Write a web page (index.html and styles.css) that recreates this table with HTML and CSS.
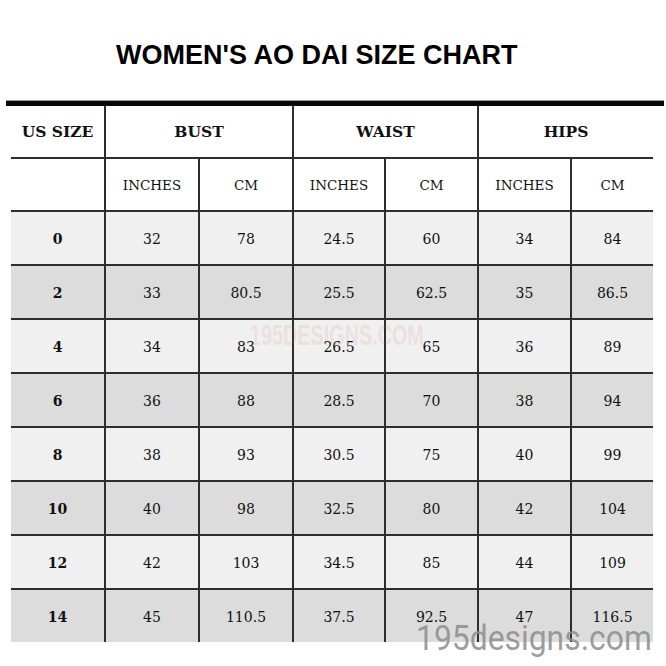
FILE: index.html
```html
<!DOCTYPE html>
<html>
<head>
<meta charset="utf-8">
<link rel="stylesheet" href="styles.css">
</head>
<body>
<div class="page">
  <h1 class="title">WOMEN'S AO DAI SIZE CHART</h1>
  <div class="rule"></div>
  <div class="chart">
    <table class="sizes">
      <colgroup>
        <col style="width:94px"><col style="width:94px"><col style="width:94px"><col style="width:92px"><col style="width:93px"><col style="width:93px"><col style="width:82px">
      </colgroup>
      <thead>
        <tr class="head1">
          <th>US SIZE</th>
          <th colspan="2">BUST</th>
          <th colspan="2">WAIST</th>
          <th colspan="2">HIPS</th>
        </tr>
        <tr class="head2">
          <th></th>
          <th>INCHES</th><th>CM</th>
          <th>INCHES</th><th>CM</th>
          <th>INCHES</th><th>CM</th>
        </tr>
      </thead>
      <tbody>
        <tr class="light"><td class="size">0</td><td>32</td><td>78</td><td>24.5</td><td>60</td><td>34</td><td>84</td></tr>
        <tr class="dark"><td class="size">2</td><td>33</td><td>80.5</td><td>25.5</td><td>62.5</td><td>35</td><td>86.5</td></tr>
        <tr class="light"><td class="size">4</td><td>34</td><td>83</td><td>26.5</td><td>65</td><td>36</td><td>89</td></tr>
        <tr class="dark"><td class="size">6</td><td>36</td><td>88</td><td>28.5</td><td>70</td><td>38</td><td>94</td></tr>
        <tr class="light"><td class="size">8</td><td>38</td><td>93</td><td>30.5</td><td>75</td><td>40</td><td>99</td></tr>
        <tr class="dark"><td class="size">10</td><td>40</td><td>98</td><td>32.5</td><td>80</td><td>42</td><td>104</td></tr>
        <tr class="light"><td class="size">12</td><td>42</td><td>103</td><td>34.5</td><td>85</td><td>44</td><td>109</td></tr>
        <tr class="dark"><td class="size">14</td><td>45</td><td>110.5</td><td>37.5</td><td>92.5</td><td>47</td><td>116.5</td></tr>
      </tbody>
    </table>
    <div class="mark-center">195DESIGNS.COM</div>
  </div>
  <div class="mark-corner">195designs.com</div>
</div>
</body>
</html>
```
FILE: styles.css
```css
html, body {
  margin: 0;
  padding: 0;
  background: #ffffff;
}
.page {
  position: relative;
  width: 666px;
  height: 666px;
  overflow: hidden;
}
.title {
  margin: 0;
  height: 100px;
  box-sizing: border-box;
  padding: 40px 0 0 116px;
  font-family: "Liberation Sans", Arial, sans-serif;
  font-weight: bold;
  font-size: 27px;
  line-height: 31px;
  color: #000;
}
.rule {
  margin-left: 6px;
  width: 658px;
  background: #080808;
  border-top: 1px solid #9a9a9a;
  box-sizing: border-box;
  height: 6px;
}
.chart {
  position: relative;
  margin-left: 11px;
  width: 642px;
}
.sizes {
  border-collapse: collapse;
  table-layout: fixed;
  width: 642px;
  font-family: "DejaVu Serif", Georgia, serif;
  color: #111;
}
.sizes th, .sizes td {
  padding: 0;
  text-align: center;
  vertical-align: middle;
  border-right: 2px solid #2e2e2e;
  border-bottom: 2px solid #2e2e2e;
}
.sizes tr > :last-child {
  border-right: none;
}
.sizes tbody tr:last-child td {
  border-bottom: none;
}
.head1 th {
  height: 51px;
  font-size: 15.5px;
  font-weight: bold;
  background: #fff;
}
.head2 th {
  height: 51px;
  font-size: 13.5px;
  font-weight: normal;
  background: #fff;
}
.sizes td {
  height: 50px;
  font-size: 14px;
  padding-top: 2px;
}
.sizes td.size {
  font-weight: bold;
}
.light td { background: #f0f0f0; }
.dark td { background: #dcdcdc; }
.mark-center {
  position: absolute;
  left: 239px;
  top: 212px;
  font-family: "Liberation Sans", Arial, sans-serif;
  font-weight: bold;
  font-size: 30px;
  transform: scaleX(0.66);
  transform-origin: left top;
  white-space: nowrap;
  color: rgba(200, 110, 110, 0.14);
  pointer-events: none;
}
.mark-corner {
  position: absolute;
  left: 416px;
  top: 619px;
  font-family: Roboto, "Liberation Sans", sans-serif;
  font-size: 35px;
  line-height: 40px;
  white-space: nowrap;
  transform: scaleX(0.91);
  transform-origin: left top;
  color: rgba(140, 140, 140, 0.85);
}
```
